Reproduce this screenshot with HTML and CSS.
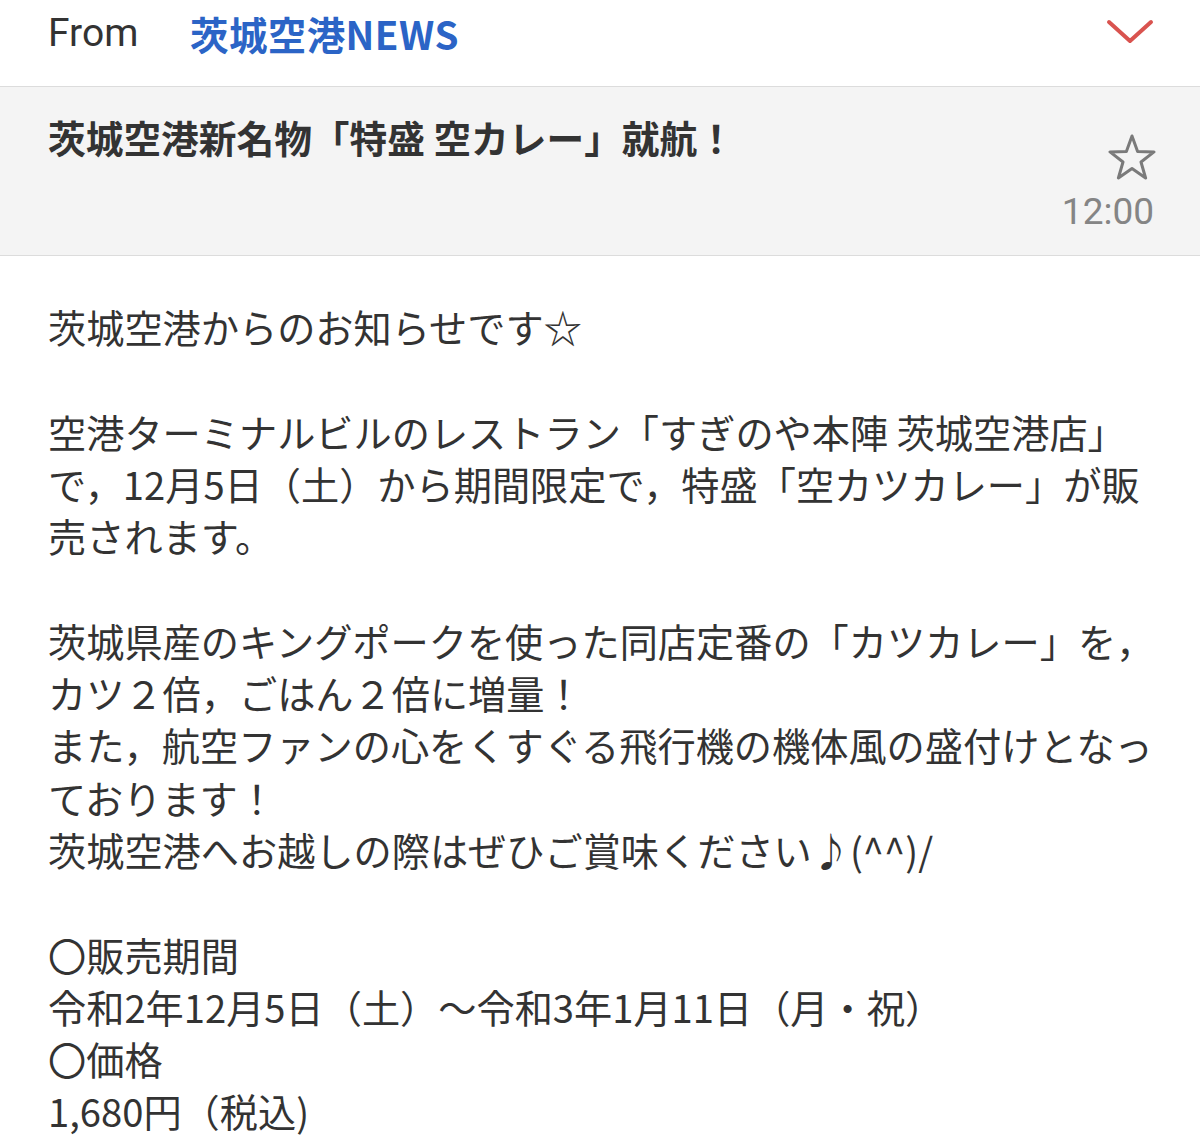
FILE: index.html
```html
<!DOCTYPE html>
<html lang="ja">
<head>
<meta charset="utf-8">
<link rel="stylesheet" href="styles.css">
</head>
<body>
<div class="page">
  <header class="header">
    <span class="from">From</span>
    <span class="sender">茨城空港NEWS</span>
    <svg class="chevron" viewBox="0 0 48 26" width="48" height="26">
      <polyline points="3,3 24,22 45,3" fill="none" stroke="#d9534f" stroke-width="4" stroke-linecap="round" stroke-linejoin="round"/>
    </svg>
  </header>
  <section class="subject-bar">
    <h1 class="subject">茨城空港新名物「特盛 空カレー」就航！</h1>
    <div class="meta">
      <svg class="star" viewBox="0 0 48 48" width="48" height="48">
        <polygon points="24,3 29.6,18.5 46,18.9 33,29 37.6,45 24,35.6 10.4,45 15,29 2,18.9 18.4,18.5" fill="none" stroke="#7a7a7a" stroke-width="3" stroke-linejoin="round"/>
      </svg>
      <span class="time">12:00</span>
    </div>
  </section>
  <main class="mail-body">
    <p>茨城空港からのお知らせです☆</p>
    <p>空港ターミナルビルのレストラン「すぎのや本陣 茨城空港店」<br>で，12月5日（土）から期間限定で，特盛「空カツカレー」が販<br>売されます。</p>
    <p>茨城県産のキングポークを使った同店定番の「カツカレー」を，<br>カツ２倍，ごはん２倍に増量！<br>また，航空ファンの心をくすぐる飛行機の機体風の盛付けとなっ<br>ております！<br>茨城空港へお越しの際はぜひご賞味ください♪(^^)/</p>
    <p>〇販売期間<br>令和2年12月5日（土）～令和3年1月11日（月・祝）<br>〇価格<br>1,680円（税込)</p>
  </main>
</div>
</body>
</html>
```

FILE: styles.css
```css
html, body {
  margin: 0;
  padding: 0;
  background: #ffffff;
}

.page {
  width: 1200px;
  font-family: "Noto Sans CJK JP", "Noto Sans", sans-serif;
  color: #333333;
}

.header {
  display: flex;
  align-items: center;
  height: 87px;
  padding: 0 46px 0 48px;
  border-bottom: 1px solid #dcdcdc;
  box-sizing: border-box;
}

.from {
  font-family: Roboto, "Noto Sans", sans-serif;
  font-size: 39px;
  color: #333333;
  width: 142px;
  margin-top: -21px;
}

.sender {
  font-size: 38.5px;
  font-weight: 700;
  color: #2b64c6;
  margin-top: -21px;
  flex: 1;
  letter-spacing: 0.4px;
}

.chevron {
  margin-top: -23px;
}

.subject-bar {
  display: flex;
  justify-content: space-between;
  background: #f4f4f4;
  height: 169px;
  padding: 0 46px 0 48px;
  border-bottom: 1px solid #dcdcdc;
  box-sizing: border-box;
}

.subject {
  margin: 0;
  padding-top: 25px;
  font-size: 37.7px;
  line-height: 50px;
  font-weight: 700;
  color: #333333;
}

.meta {
  display: flex;
  flex-direction: column;
  align-items: flex-end;
  padding-top: 46px;
}

.star {
  margin-right: -2px;
}

.time {
  font-family: Roboto, "Noto Sans", sans-serif;
  font-size: 37px;
  line-height: 46px;
  color: #858585;
  margin-top: 8px;
}

.mail-body {
  padding: 45px 48px 0 48px;
  font-size: 38.2px;
  line-height: 52.3px;
  color: #333333;
}

.mail-body p {
  margin: 0 0 52.3px 0;
  white-space: nowrap;
}
```
